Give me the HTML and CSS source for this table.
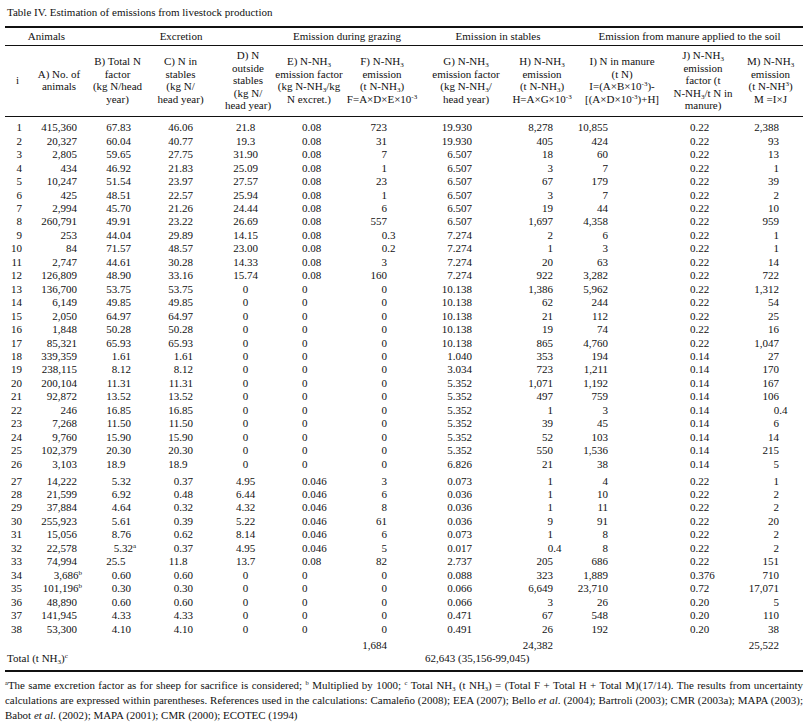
FILE: index.html
```html
<!DOCTYPE html>
<html lang="en">
<head>
<meta charset="utf-8">
<title>Table IV</title>
<link rel="stylesheet" href="styles.css">
</head>
<body>
<div class="page">
  <h1 class="title">Table IV. Estimation of emissions from livestock production</h1>
  <table class="tbl">
    <colgroup>
      <col class="c-i"><col class="c-a"><col class="c-b"><col class="c-c"><col class="c-d"><col class="c-e">
      <col class="c-f"><col class="c-g"><col class="c-h"><col class="c-ii"><col class="c-j"><col class="c-m">
    </colgroup>
    <thead>
      <tr class="grp">
        <th colspan="2">Animals</th>
        <th colspan="3">Excretion</th>
        <th colspan="2">Emission during grazing</th>
        <th colspan="2">Emission in stables</th>
        <th colspan="3">Emission from manure applied to the soil</th>
      </tr>
      <tr class="cols">
        <th>i</th>
        <th>A) No. of<br>animals</th>
        <th>B) Total N<br>factor<br>(kg N/head<br>year)</th>
        <th>C) N in<br>stables<br>(kg N/<br>head year)</th>
        <th class="h-d">D) N<br>outside<br>stables<br>(kg N/<br>head year)</th>
        <th>E) N-NH<sub>3</sub><br>emission factor<br>(kg N-NH<sub>3</sub>/kg<br>N excret.)</th>
        <th>F) N-NH<sub>3</sub><br>emission<br>(t N-NH<sub>3</sub>)<br>F=A×D×E×10<sup>-3</sup></th>
        <th class="h-g">G) N-NH<sub>3</sub><br>emission factor<br>(kg N-NH<sub>3</sub>/<br>head year)</th>
        <th>H) N-NH<sub>3</sub><br>emission<br>(t N-NH<sub>3</sub>)<br>H=A×G×10<sup>-3</sup></th>
        <th>I) N in manure<br>(t N)<br>I=(A×B×10<sup>-3</sup>)-<br>[(A×D×10<sup>-3</sup>)+H]</th>
        <th>J) N-NH<sub>3</sub><br>emission<br>factor (t<br>N-NH<sub>3</sub>/t N in<br>manure)</th>
        <th>M) N-NH<sub>3</sub><br>emission<br>(t N-NH<sup>3</sup>)<br>M =I×J</th>
      </tr>
    </thead>
    <tbody class="data">
      <tr class="first"><td>1</td><td>415,360</td><td>67.83</td><td>46.06</td><td>21.8</td><td>0.08</td><td>723</td><td>19.930</td><td>8,278</td><td>10,855</td><td>0.22</td><td>2,388</td></tr>
      <tr><td>2</td><td>20,327</td><td>60.04</td><td>40.77</td><td>19.3</td><td>0.08</td><td>31</td><td>19.930</td><td>405</td><td>424</td><td>0.22</td><td>93</td></tr>
      <tr><td>3</td><td>2,805</td><td>59.65</td><td>27.75</td><td>31.90</td><td>0.08</td><td>7</td><td>6.507</td><td>18</td><td>60</td><td>0.22</td><td>13</td></tr>
      <tr><td>4</td><td>434</td><td>46.92</td><td>21.83</td><td>25.09</td><td>0.08</td><td>1</td><td>6.507</td><td>3</td><td>7</td><td>0.22</td><td>1</td></tr>
      <tr><td>5</td><td>10,247</td><td>51.54</td><td>23.97</td><td>27.57</td><td>0.08</td><td>23</td><td>6.507</td><td>67</td><td>179</td><td>0.22</td><td>39</td></tr>
      <tr><td>6</td><td>425</td><td>48.51</td><td>22.57</td><td>25.94</td><td>0.08</td><td>1</td><td>6.507</td><td>3</td><td>7</td><td>0.22</td><td>2</td></tr>
      <tr><td>7</td><td>2,994</td><td>45.70</td><td>21.26</td><td>24.44</td><td>0.08</td><td>6</td><td>6.507</td><td>19</td><td>44</td><td>0.22</td><td>10</td></tr>
      <tr><td>8</td><td>260,791</td><td>49.91</td><td>23.22</td><td>26.69</td><td>0.08</td><td>557</td><td>6.507</td><td>1,697</td><td>4,358</td><td>0.22</td><td>959</td></tr>
      <tr><td>9</td><td>253</td><td>44.04</td><td>29.89</td><td>14.15</td><td>0.08</td><td>0<span class="ov">.3</span></td><td>7.274</td><td>2</td><td>6</td><td>0.22</td><td>1</td></tr>
      <tr><td>10</td><td>84</td><td>71.57</td><td>48.57</td><td>23.00</td><td>0.08</td><td>0<span class="ov">.2</span></td><td>7.274</td><td>1</td><td>3</td><td>0.22</td><td>1</td></tr>
      <tr><td>11</td><td>2,747</td><td>44.61</td><td>30.28</td><td>14.33</td><td>0.08</td><td>3</td><td>7.274</td><td>20</td><td>63</td><td>0.22</td><td>14</td></tr>
      <tr><td>12</td><td>126,809</td><td>48.90</td><td>33.16</td><td>15.74</td><td>0.08</td><td>160</td><td>7.274</td><td>922</td><td>3,282</td><td>0.22</td><td>722</td></tr>
      <tr><td>13</td><td>136,700</td><td>53.75</td><td>53.75</td><td>0</td><td>0</td><td>0</td><td>10.138</td><td>1,386</td><td>5,962</td><td>0.22</td><td>1,312</td></tr>
      <tr><td>14</td><td>6,149</td><td>49.85</td><td>49.85</td><td>0</td><td>0</td><td>0</td><td>10.138</td><td>62</td><td>244</td><td>0.22</td><td>54</td></tr>
      <tr><td>15</td><td>2,050</td><td>64.97</td><td>64.97</td><td>0</td><td>0</td><td>0</td><td>10.138</td><td>21</td><td>112</td><td>0.22</td><td>25</td></tr>
      <tr><td>16</td><td>1,848</td><td>50.28</td><td>50.28</td><td>0</td><td>0</td><td>0</td><td>10.138</td><td>19</td><td>74</td><td>0.22</td><td>16</td></tr>
      <tr><td>17</td><td>85,321</td><td>65.93</td><td>65.93</td><td>0</td><td>0</td><td>0</td><td>10.138</td><td>865</td><td>4,760</td><td>0.22</td><td>1,047</td></tr>
      <tr><td>18</td><td>339,359</td><td>1.61</td><td>1.61</td><td>0</td><td>0</td><td>0</td><td>1.040</td><td>353</td><td>194</td><td>0.14</td><td>27</td></tr>
      <tr><td>19</td><td>238,115</td><td>8.12</td><td>8.12</td><td>0</td><td>0</td><td>0</td><td>3.034</td><td>723</td><td>1,211</td><td>0.14</td><td>170</td></tr>
      <tr><td>20</td><td>200,104</td><td>11.31</td><td>11.31</td><td>0</td><td>0</td><td>0</td><td>5.352</td><td>1,071</td><td>1,192</td><td>0.14</td><td>167</td></tr>
      <tr><td>21</td><td>92,872</td><td>13.52</td><td>13.52</td><td>0</td><td>0</td><td>0</td><td>5.352</td><td>497</td><td>759</td><td>0.14</td><td>106</td></tr>
      <tr><td>22</td><td>246</td><td>16.85</td><td>16.85</td><td>0</td><td>0</td><td>0</td><td>5.352</td><td>1</td><td>3</td><td>0.14</td><td>0<span class="ov">.4</span></td></tr>
      <tr><td>23</td><td>7,268</td><td>11.50</td><td>11.50</td><td>0</td><td>0</td><td>0</td><td>5.352</td><td>39</td><td>45</td><td>0.14</td><td>6</td></tr>
      <tr><td>24</td><td>9,760</td><td>15.90</td><td>15.90</td><td>0</td><td>0</td><td>0</td><td>5.352</td><td>52</td><td>103</td><td>0.14</td><td>14</td></tr>
      <tr><td>25</td><td>102,379</td><td>20.30</td><td>20.30</td><td>0</td><td>0</td><td>0</td><td>5.352</td><td>550</td><td>1,536</td><td>0.14</td><td>215</td></tr>
      <tr><td>26</td><td>3,103</td><td><span class="sh">18.9</span></td><td><span class="sh">18.9</span></td><td>0</td><td>0</td><td>0</td><td>6.826</td><td>21</td><td>38</td><td>0.14</td><td>5</td></tr>
      <tr class="gap"><td>27</td><td>14,222</td><td>5.32</td><td>0.37</td><td>4.95</td><td>0.046</td><td>3</td><td>0.073</td><td>1</td><td>4</td><td>0.22</td><td>1</td></tr>
      <tr><td>28</td><td>21,599</td><td>6.92</td><td>0.48</td><td>6.44</td><td>0.046</td><td>6</td><td>0.036</td><td>1</td><td>10</td><td>0.22</td><td>2</td></tr>
      <tr><td>29</td><td>37,884</td><td>4.64</td><td>0.32</td><td>4.32</td><td>0.046</td><td>8</td><td>0.036</td><td>1</td><td>11</td><td>0.22</td><td>2</td></tr>
      <tr><td>30</td><td>255,923</td><td>5.61</td><td>0.39</td><td>5.22</td><td>0.046</td><td>61</td><td>0.036</td><td>9</td><td>91</td><td>0.22</td><td>20</td></tr>
      <tr><td>31</td><td>15,056</td><td>8.76</td><td>0.62</td><td>8.14</td><td>0.046</td><td>6</td><td>0.073</td><td>1</td><td>8</td><td>0.22</td><td>2</td></tr>
      <tr><td>32</td><td>22,578</td><td>5.32<sup class="fn">a</sup></td><td>0.37</td><td>4.95</td><td>0.046</td><td>5</td><td>0.017</td><td>0<span class="ov">.4</span></td><td>8</td><td>0.22</td><td>2</td></tr>
      <tr><td>33</td><td>74,994</td><td><span class="sh">25.5</span></td><td><span class="sh">11.8</span></td><td>13.7</td><td>0.08</td><td>82</td><td>2.737</td><td>205</td><td>686</td><td>0.22</td><td>151</td></tr>
      <tr><td>34</td><td>3,686<sup class="fn">b</sup></td><td>0.60</td><td>0.60</td><td>0</td><td>0</td><td>0</td><td>0.088</td><td>323</td><td>1,889</td><td>0.376</td><td>710</td></tr>
      <tr><td>35</td><td>101,196<sup class="fn">b</sup></td><td>0.30</td><td>0.30</td><td>0</td><td>0</td><td>0</td><td>0.066</td><td>6,649</td><td>23,710</td><td>0.72</td><td>17,071</td></tr>
      <tr><td>36</td><td>48,890</td><td>0.60</td><td>0.60</td><td>0</td><td>0</td><td>0</td><td>0.066</td><td>3</td><td>26</td><td>0.20</td><td>5</td></tr>
      <tr><td>37</td><td>141,945</td><td>4.33</td><td>4.33</td><td>0</td><td>0</td><td>0</td><td>0.471</td><td>67</td><td>548</td><td>0.20</td><td>110</td></tr>
      <tr><td>38</td><td>53,300</td><td>4.10</td><td>4.10</td><td>0</td><td>0</td><td>0</td><td>0.491</td><td>26</td><td>192</td><td>0.20</td><td>38</td></tr>
      <tr class="subtotal"><td></td><td></td><td></td><td></td><td></td><td></td><td>1,684</td><td></td><td>24,382</td><td></td><td></td><td>25,522</td></tr>
    </tbody>
    <tbody>
      <tr class="total">
        <td colspan="7" class="t-label">Total (t NH<sub>3</sub>)<sup>c</sup></td>
        <td colspan="5" class="t-value">62,643 (35,156-99,045)</td>
      </tr>
    </tbody>
  </table>
  <p class="notes">
    <span class="line"><sup>a</sup>The same excretion factor as for sheep for sacrifice is considered; <sup>b</sup> Multiplied by 1000; <sup>c</sup> Total NH<sub>3</sub> (t NH<sub>3</sub>) = (Total F + Total H + Total M)(17/14). The results from uncertainty</span>
    <span class="line">calculations are expressed within parentheses. References used in the calculations: Camaleño (2008); EEA (2007); Bello <em>et al</em>. (2004); Bartroli (2003); CMR (2003a); MAPA (2003);</span>
    <span class="last">Babot <em>et al</em>. (2002); MAPA (2001); CMR (2000); ECOTEC (1994)</span>
  </p>
</div>
</body>
</html>
```

FILE: styles.css
```css
html, body {
  margin: 0;
  padding: 0;
  background: #ffffff;
}

body {
  color: #111111;
  font-family: "Liberation Serif", "Times New Roman", serif;
  font-size: 11px;
}

.page {
  padding: 5px 5px 0 5px;
  width: 798px;
}

.title {
  margin: 0 0 0 2px;
  font-size: 11px;
  font-weight: normal;
  line-height: 14px;
}

.tbl {
  margin-top: 7px;
  width: 798px;
  table-layout: fixed;
  border-collapse: separate;
  border-spacing: 0;
}

.c-i { width: 25px; }
.c-a { width: 58px; }
.c-b { width: 59px; }
.c-c { width: 67px; }
.c-d { width: 60px; }
.c-e { width: 70px; }
.c-f { width: 76px; }
.c-g { width: 88px; }
.c-h { width: 68px; }
.c-ii { width: 92px; }
.c-j { width: 70px; }
.c-m { width: 65px; }

sub, sup {
  font-size: 7px;
  line-height: 0;
}

sub { vertical-align: -2px; }
sup { vertical-align: 4px; }

.grp th {
  font-weight: normal;
  text-align: center;
  line-height: 13px;
  padding: 2px 0;
  border-top: 2px solid #111;
  border-bottom: 1px solid #111;
  white-space: nowrap;
}

.cols th {
  font-weight: normal;
  text-align: center;
  vertical-align: middle;
  line-height: 12.5px;
  padding: 3px 0 4.5px 0;
  border-bottom: 1px solid #111;
  white-space: nowrap;
}

.cols th.h-d { padding-left: 8px; }
.cols th.h-g { padding-left: 4px; }

.data td {
  padding: 0;
  line-height: 13.45px;
  white-space: nowrap;
  text-align: right;
}

.data tr.first td { padding-top: 4.3px; }
.data tr.gap td { padding-top: 3.5px; }
.data tr.subtotal td { padding-top: 2.5px; }

.data td:nth-child(1) { padding-right: 8px; }
.data td:nth-child(2) { padding-right: 11px; }
.data td:nth-child(3) { padding-right: 16px; }
.data td:nth-child(4) { padding-right: 21px; }
.data td:nth-child(5) { text-align: center; padding-left: 3px; }
.data td:nth-child(6) { text-align: left; padding-left: 28px; }
.data td:nth-child(7) { padding-right: 33px; }
.data td:nth-child(8) { padding-right: 36px; }
.data td:nth-child(9) { padding-right: 23px; }
.data td:nth-child(10) { padding-right: 60px; }
.data td:nth-child(11) { text-align: left; padding-left: 22px; }
.data td:nth-child(12) { padding-right: 24px; }

.ov { margin-right: -8.5px; }
.fn { margin-right: -5px; }
.sh { margin-right: 5.5px; }

.total td {
  line-height: 13.45px;
  padding: 0.5px 0 4.5px 0;
  border-bottom: 2px solid #111;
  white-space: nowrap;
}

.t-label { padding-left: 2px !important; text-align: left; }
.t-value { padding-left: 5px !important; text-align: left; }

.notes {
  margin: 6px 0 0 0;
  font-size: 10.95px;
  line-height: 15px;
}

.notes .line {
  display: block;
  text-align: justify;
  text-align-last: justify;
}

.notes .last {
  display: block;
  text-align: left;
}

.notes sup { font-size: 6.5px; }
.notes sub { font-size: 6.5px; }
.notes em { font-style: italic; }
```
